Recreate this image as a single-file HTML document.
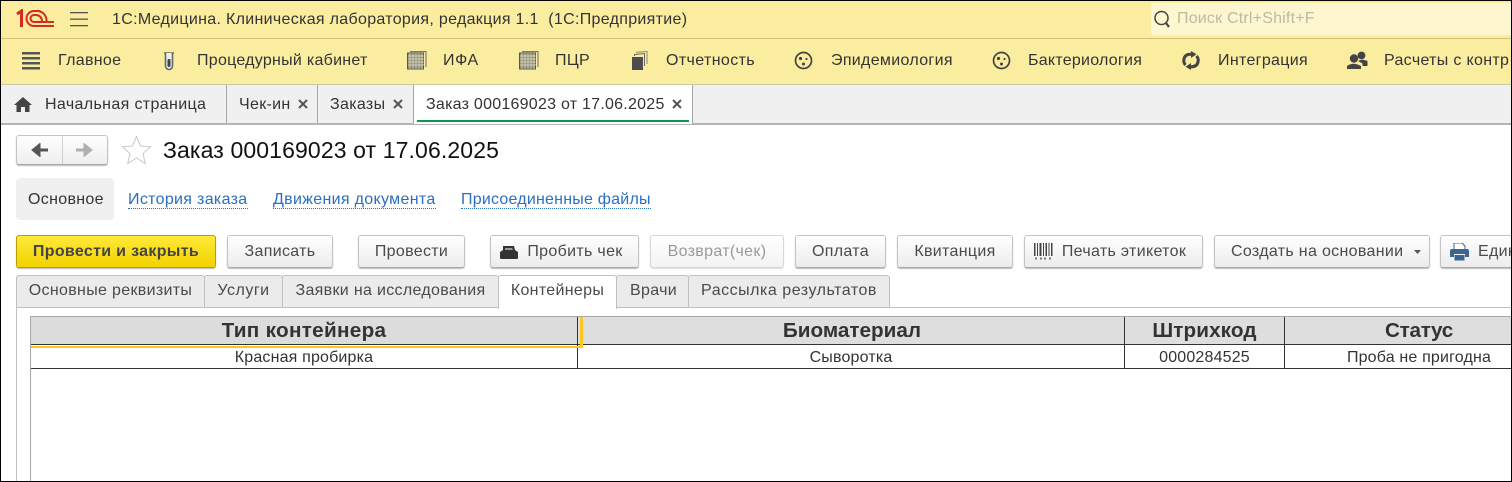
<!DOCTYPE html>
<html lang="ru"><head><meta charset="utf-8"><title>Заказ</title>
<style>
html,body{margin:0;padding:0;background:#fff}
#p{position:relative;width:1512px;height:482px;overflow:hidden;background:#fff;font-family:"Liberation Sans",Arial,sans-serif;font-size:16px;letter-spacing:.32px;color:#333}
#p div,#p span.t,#p svg{position:absolute}
.t{white-space:nowrap;line-height:18px}
.btn{box-sizing:border-box;top:235px;height:33px;border:1px solid #c4c4c4;border-bottom-color:#aaa;border-radius:3px;background:linear-gradient(#fff,#ececec);box-shadow:0 1px 1px #bbb;text-align:center;line-height:32px;color:#4a4a4a;white-space:nowrap;overflow:hidden}
.tab{box-sizing:border-box;top:275px;height:33px;border:1px solid #c0c0c0;border-radius:3px 3px 0 0;background:#ebebeb;text-align:center;line-height:30px;color:#4a4a4a;white-space:nowrap}
.h{top:317px;height:28px;box-sizing:border-box;background:#dedede;border-right:1px solid #333;border-bottom:1px solid #333;text-align:center;font-weight:bold;font-size:20.700px;letter-spacing:0;line-height:28px;color:#333;white-space:nowrap}
.c{top:345px;height:24px;box-sizing:border-box;border-right:1px solid #333;border-bottom:1px solid #333;text-align:center;font-size:16px;letter-spacing:.17px;line-height:25px;color:#333;white-space:nowrap}
a{color:#2a6fc0;text-decoration:none;border-bottom:1px dotted #2a6fc0}
.v{background:#a5a5a5;width:1px}
.top{font-size:16px;letter-spacing:.31px}
</style></head><body><div id="p">

<div style="left:0;top:1px;width:1512px;height:37px;background:#fbeda0"></div>
<div style="left:0;top:38px;width:1512px;height:1px;background:#d4c272"></div>
<div style="left:0;top:39px;width:1512px;height:45px;background:#fbeda0"></div>
<div style="left:0;top:84px;width:1512px;height:1px;background:#c9c9a5"></div>
<div style="left:0;top:85px;width:1512px;height:38px;background:#f0f0f0"></div>
<div style="left:0;top:123px;width:1512px;height:2px;background:#b4b4b4"></div>

<svg style="left:16px;top:9px" width="39" height="20" viewBox="0 0 39 20" fill="none" stroke="#d42a20" stroke-width="2"><path d="M1 5 L5.500 2 V18" stroke-width="3"/><path d="M38 17 H18 A7.500 7.500 0 1 1 18 2 H20 A9.500 9.500 0 0 1 30.500 12"/><path d="M38 13 H18 A3.500 3.500 0 1 1 18 6 H20 A6 6 0 0 1 26 12"/></svg>
<svg style="left:70px;top:12px" width="19" height="15" fill="#555"><rect y="0" width="18" height="1.300"/><rect y="6.500" width="18" height="1.300"/><rect y="13" width="18" height="1.300"/></svg>
<span class="t top" style="left:112px;top:11px;color:#333">1С:Медицина. Клиническая лаборатория, редакция 1.1&nbsp; (1С:Предприятие)</span>
<div style="left:1151px;top:3px;width:361px;height:32px;background:#fdf6cf;border-radius:3px 0 0 3px"></div>
<svg style="left:1153px;top:10px" width="20" height="20" fill="none" stroke="#444"><circle cx="8.500" cy="8" r="6.500" stroke-width="1.500"/><path d="M13 13 L16 17" stroke-width="2.200"/></svg>
<span class="t top" style="left:1177px;top:10px;letter-spacing:.2px;color:#bdb9a4">Поиск Ctrl+Shift+F</span>

<svg style="left:22px;top:52px" width="19" height="18" fill="#555"><rect y="0" width="18" height="2.500"/><rect y="5" width="18" height="2.500"/><rect y="10" width="18" height="2.500"/><rect y="15" width="18" height="2.500"/></svg>
<span class="t" style="left:58px;top:52px">Главное</span>
<svg style="left:163px;top:52px" width="13" height="19" fill="none"><path d="M1 1 H11" stroke="#666" stroke-width="1.500"/><path d="M2.500 1 V14 A3.500 3.500 0 0 0 9.500 14 V1" stroke="#666" stroke-width="1.600" fill="#eee"/><rect x="4.500" y="7" width="3" height="8" rx="1.200" fill="#444"/></svg>
<span class="t" style="left:197px;top:52px;letter-spacing:.27px">Процедурный кабинет</span>

<svg style="left:407px;top:51px" width="20" height="19" viewBox="0 0 20 19"><rect x="0.500" y="2" width="16" height="16" fill="#8a8a80" stroke="#555"/><path d="M3 2 V18 M6 2 V18 M9 2 V18 M12 2 V18 M15 2 V18 M1 5 H17 M1 8 H17 M1 11 H17 M1 14 H17" stroke="#e9e3b8" stroke-width=".7"/><path d="M3 .6 H19 V16" stroke="#666" fill="none"/></svg>
<span class="t" style="left:443px;top:52px;letter-spacing:.6px">ИФА</span>
<svg style="left:519px;top:51px" width="20" height="19" viewBox="0 0 20 19"><rect x="0.500" y="2" width="16" height="16" fill="#8a8a80" stroke="#555"/><path d="M3 2 V18 M6 2 V18 M9 2 V18 M12 2 V18 M15 2 V18 M1 5 H17 M1 8 H17 M1 11 H17 M1 14 H17" stroke="#e9e3b8" stroke-width=".7"/><path d="M3 .6 H19 V16" stroke="#666" fill="none"/></svg>
<span class="t" style="left:555px;top:52px">ПЦР</span>
<svg style="left:631px;top:51px" width="17" height="19" viewBox="0 0 17 19"><rect x="1" y="6" width="11" height="13" fill="#4d4d4d"/><path d="M3.500 5 V3.500 L13.500 2.500 V15" fill="none" stroke="#666" stroke-width="1"/><path d="M6 2.500 V1.200 L16 .5 V13" fill="none" stroke="#888" stroke-width="1"/></svg>
<span class="t" style="left:666px;top:52px;letter-spacing:.38px">Отчетность</span>

<svg style="left:794px;top:51px" width="19" height="19" fill="#444"><circle cx="9.500" cy="9.500" r="8" fill="none" stroke="#444" stroke-width="1.700"/><circle cx="6.500" cy="7.500" r="1.600"/><circle cx="12.500" cy="8" r="1.100"/><circle cx="9.500" cy="13" r="1.500"/></svg>
<span class="t" style="left:831px;top:52px">Эпидемиология</span>
<svg style="left:992px;top:51px" width="19" height="19" fill="#444"><circle cx="9.500" cy="9.500" r="8" fill="none" stroke="#444" stroke-width="1.700"/><circle cx="6.500" cy="7.500" r="1.600"/><circle cx="12.500" cy="8" r="1.100"/><circle cx="9.500" cy="13" r="1.500"/></svg>
<span class="t" style="left:1028px;top:52px;letter-spacing:.25px">Бактериология</span>
<svg style="left:1182px;top:51px" width="18" height="19" viewBox="0 0 18 19" fill="none" stroke="#444" stroke-width="3"><path d="M3.500 14 Q1.500 12 1.800 9 Q2.500 3.500 8 3.300 H9"/><path d="M14.500 5 Q16.500 7 16.200 10 Q15.500 15.500 10 15.700 H9"/><path d="M9 0 L14.500 3.300 L9 7 Z M9 12 L3.500 15.700 L9 19 Z" fill="#444" stroke="none"/></svg>
<span class="t" style="left:1218px;top:52px">Интеграция</span>
<svg style="left:1347px;top:51px" width="21" height="19" viewBox="0 0 21 19" fill="#444"><circle cx="14.500" cy="4.500" r="3.900"/><path d="M11 10 Q15 7.500 20.500 10 V15 H15.500 V12.500 Z"/><circle cx="7" cy="7.500" r="4.200"/><path d="M0 18 V15 Q6 10.500 14 15 V18 Z"/></svg>
<span class="t" style="left:1384px;top:52px">Расчеты с контр</span>

<svg style="left:14px;top:97px" width="18" height="15" fill="#444"><path d="M9 0 L18 8 H15.500 V15 H11 V10 H7 V15 H2.500 V8 H0 Z"/></svg>
<span class="t" style="left:45px;top:96px;letter-spacing:.36px">Начальная страница</span>
<div class="v" style="left:226px;top:85px;height:38px"></div>
<span class="t" style="left:239px;top:96px">Чек-ин</span>
<svg style="left:298px;top:99px" width="10" height="10" stroke="#555" stroke-width="2"><path d="M1 1 L9 9 M9 1 L1 9"/></svg>
<div class="v" style="left:317px;top:85px;height:38px"></div>
<span class="t" style="left:330px;top:96px">Заказы</span>
<svg style="left:393px;top:99px" width="10" height="10" stroke="#555" stroke-width="2"><path d="M1 1 L9 9 M9 1 L1 9"/></svg>
<div class="v" style="left:413px;top:85px;height:38px"></div>
<div style="left:414px;top:85px;width:278px;height:39px;background:#fff"></div>
<div class="v" style="left:692px;top:85px;height:38px"></div>
<span class="t" style="left:426px;top:96px;letter-spacing:.25px">Заказ 000169023 от 17.06.2025</span>
<svg style="left:672px;top:99px" width="10" height="10" stroke="#555" stroke-width="2"><path d="M1 1 L9 9 M9 1 L1 9"/></svg>
<div style="left:417px;top:120px;width:272px;height:2px;background:#0d9650"></div>

<div style="left:16px;top:135px;width:92px;height:30px;box-sizing:border-box;border:1px solid #c4c4c4;border-bottom-color:#aaa;border-radius:3px;background:linear-gradient(#fff,#eee);box-shadow:0 1px 1px #bbb"></div>
<div style="left:62px;top:136px;width:1px;height:28px;background:#d0d0d0"></div>
<svg style="left:30px;top:143px" width="70" height="14"><path d="M18 7 H7 M9 2.500 L3.500 7 L9 11.500 Z" stroke="#555" stroke-width="3" fill="#555"/><path d="M46 7 H57 M55 2.500 L60.500 7 L55 11.500 Z" stroke="#b0b0b0" stroke-width="3" fill="#b0b0b0"/></svg>
<svg style="left:121px;top:135px" width="31" height="30" viewBox="0 0 31 30"><path d="M15.500 1.500 L19.500 11 L29.500 11.800 L22 18.500 L24.300 28.500 L15.500 23 L6.700 28.500 L9 18.500 L1.500 11.800 L11.500 11 Z" fill="#fff" stroke="#c9c9c9"/></svg>
<span class="t" style="left:163px;top:137px;font-size:23px;letter-spacing:.12px;line-height:26px;color:#111">Заказ 000169023 от 17.06.2025</span>

<div style="left:16px;top:178px;width:98px;height:42px;background:#f0f0f0;border-radius:4px"></div>
<span class="t" style="left:28px;top:191px;color:#333">Основное</span>
<span class="t" style="left:128px;top:191px"><a>История заказа</a></span>
<span class="t" style="left:273px;top:191px"><a>Движения документа</a></span>
<span class="t" style="left:461px;top:191px;letter-spacing:.22px"><a>Присоединенные файлы</a></span>

<div class="btn" style="left:16px;width:200px;background:linear-gradient(#ffe93a,#f3d200);border-color:#b8a000;font-weight:bold;color:#444">Провести и закрыть</div>
<div class="btn" style="left:227px;width:106px">Записать</div>
<div class="btn" style="left:358px;width:107px">Провести</div>
<div class="btn" style="left:490px;width:149px;padding-left:21px">Пробить чек</div>
<svg style="left:499px;top:245px" width="20" height="15" viewBox="0 0 20 15"><path d="M4 1 L15 1 L16 5 L19 7 V13 Q19 14 17 14 H3 Q1 14 1 13 V7 L4 5 Z" fill="#333"/><path d="M6 3 H13 L14 5 H6 Z" fill="#999"/></svg>
<div class="btn" style="left:650px;width:134px;color:#999;border-color:#d6d6d6;box-shadow:0 1px 1px #ddd;background:linear-gradient(#fff,#f3f3f3)">Возврат(чек)</div>
<div class="btn" style="left:795px;width:91px">Оплата</div>
<div class="btn" style="left:897px;width:116px">Квитанция</div>
<div class="btn" style="left:1024px;width:179px;padding-left:21px">Печать этикеток</div>
<svg style="left:1034px;top:243px" width="19" height="17" fill="#444"><path d="M0 0h1.500v13H0zM3 0h1v13H3zM5.500 0h2v13h-2zM9 0h1v13H9zM11.500 0h1.500v13h-1.500zM14.500 0h1v13h-1zM17 0h1.500v13H17z"/><path d="M1 14.500h2v2H1zM6 14.500h2v2H6zM10 14.500h2v2h-2zM15 14.500h2v2h-2z" fill="#777"/></svg>
<div class="btn" style="left:1214px;width:216px;text-align:left;padding-left:16px">Создать на основании</div>
<svg style="left:1414px;top:250px" width="7" height="4"><path d="M0 0 H7 L3.500 4 Z" fill="#555"/></svg>
<div class="btn" style="left:1440px;width:90px;text-align:left;padding-left:37px">Единый</div>
<svg style="left:1450px;top:243px" width="19" height="18" viewBox="0 0 19 18"><path d="M4 0 H12 L15 3 V8 H4 Z" fill="#fff" stroke="#3c6690"/><path d="M2 6 H17 Q19 6 19 8 V14 H15 V11 H4 V14 H0 V8 Q0 6 2 6 Z" fill="#3c6690"/><rect x="4.500" y="12" width="10" height="5.500" fill="#3c6690"/></svg>

<div style="left:16px;top:307px;width:1496px;height:1px;background:#c0c0c0"></div>
<div style="left:16px;top:307px;width:1px;height:175px;background:#c0c0c0"></div>
<div class="tab" style="left:16px;width:189px">Основные реквизиты</div>
<div class="tab" style="left:204px;width:79px;letter-spacing:.5px">Услуги</div>
<div class="tab" style="left:282px;width:217px">Заявки на исследования</div>
<div class="tab" style="left:498px;width:119px;height:34px;background:#fff;border-bottom:0">Контейнеры</div>
<div class="tab" style="left:616px;width:73px;padding-left:2px">Врачи</div>
<div class="tab" style="left:688px;width:202px;letter-spacing:.52px">Рассылка результатов</div>

<div style="left:30px;top:316px;width:1482px;height:1px;background:#a8a8a8"></div>
<div style="left:30px;top:316px;width:1px;height:166px;background:#a8a8a8"></div>
<div class="h" style="left:31px;width:547px;background:#dcdcdc;letter-spacing:.3px">Тип контейнера</div>
<div class="h" style="left:578px;width:547px;padding-left:2px">Биоматериал</div>
<div class="h" style="left:1125px;width:160px;letter-spacing:.1px">Штрихкод</div>
<div class="h" style="left:1285px;width:268px;border-right:0;letter-spacing:-.3px">Статус</div>
<div class="c" style="left:31px;width:547px">Красная пробирка</div>
<div class="c" style="left:578px;width:547px">Сыворотка</div>
<div class="c" style="left:1125px;width:160px">0000284525</div>
<div class="c" style="left:1285px;width:268px;border-right:0">Проба не пригодна</div>
<div style="left:31px;top:346px;width:552px;height:2px;background:#fbc61d"></div>
<div style="left:580px;top:317px;width:3px;height:31px;background:#fbc61d"></div>

<div style="left:0;top:0;width:1512px;height:1px;background:#000"></div>
<div style="left:0;top:0;width:1px;height:482px;background:#000"></div>
<div style="left:1511px;top:0;width:1px;height:482px;background:#000"></div>
<div style="left:0;top:481px;width:1512px;height:1px;background:#000"></div>
</div></body></html>
